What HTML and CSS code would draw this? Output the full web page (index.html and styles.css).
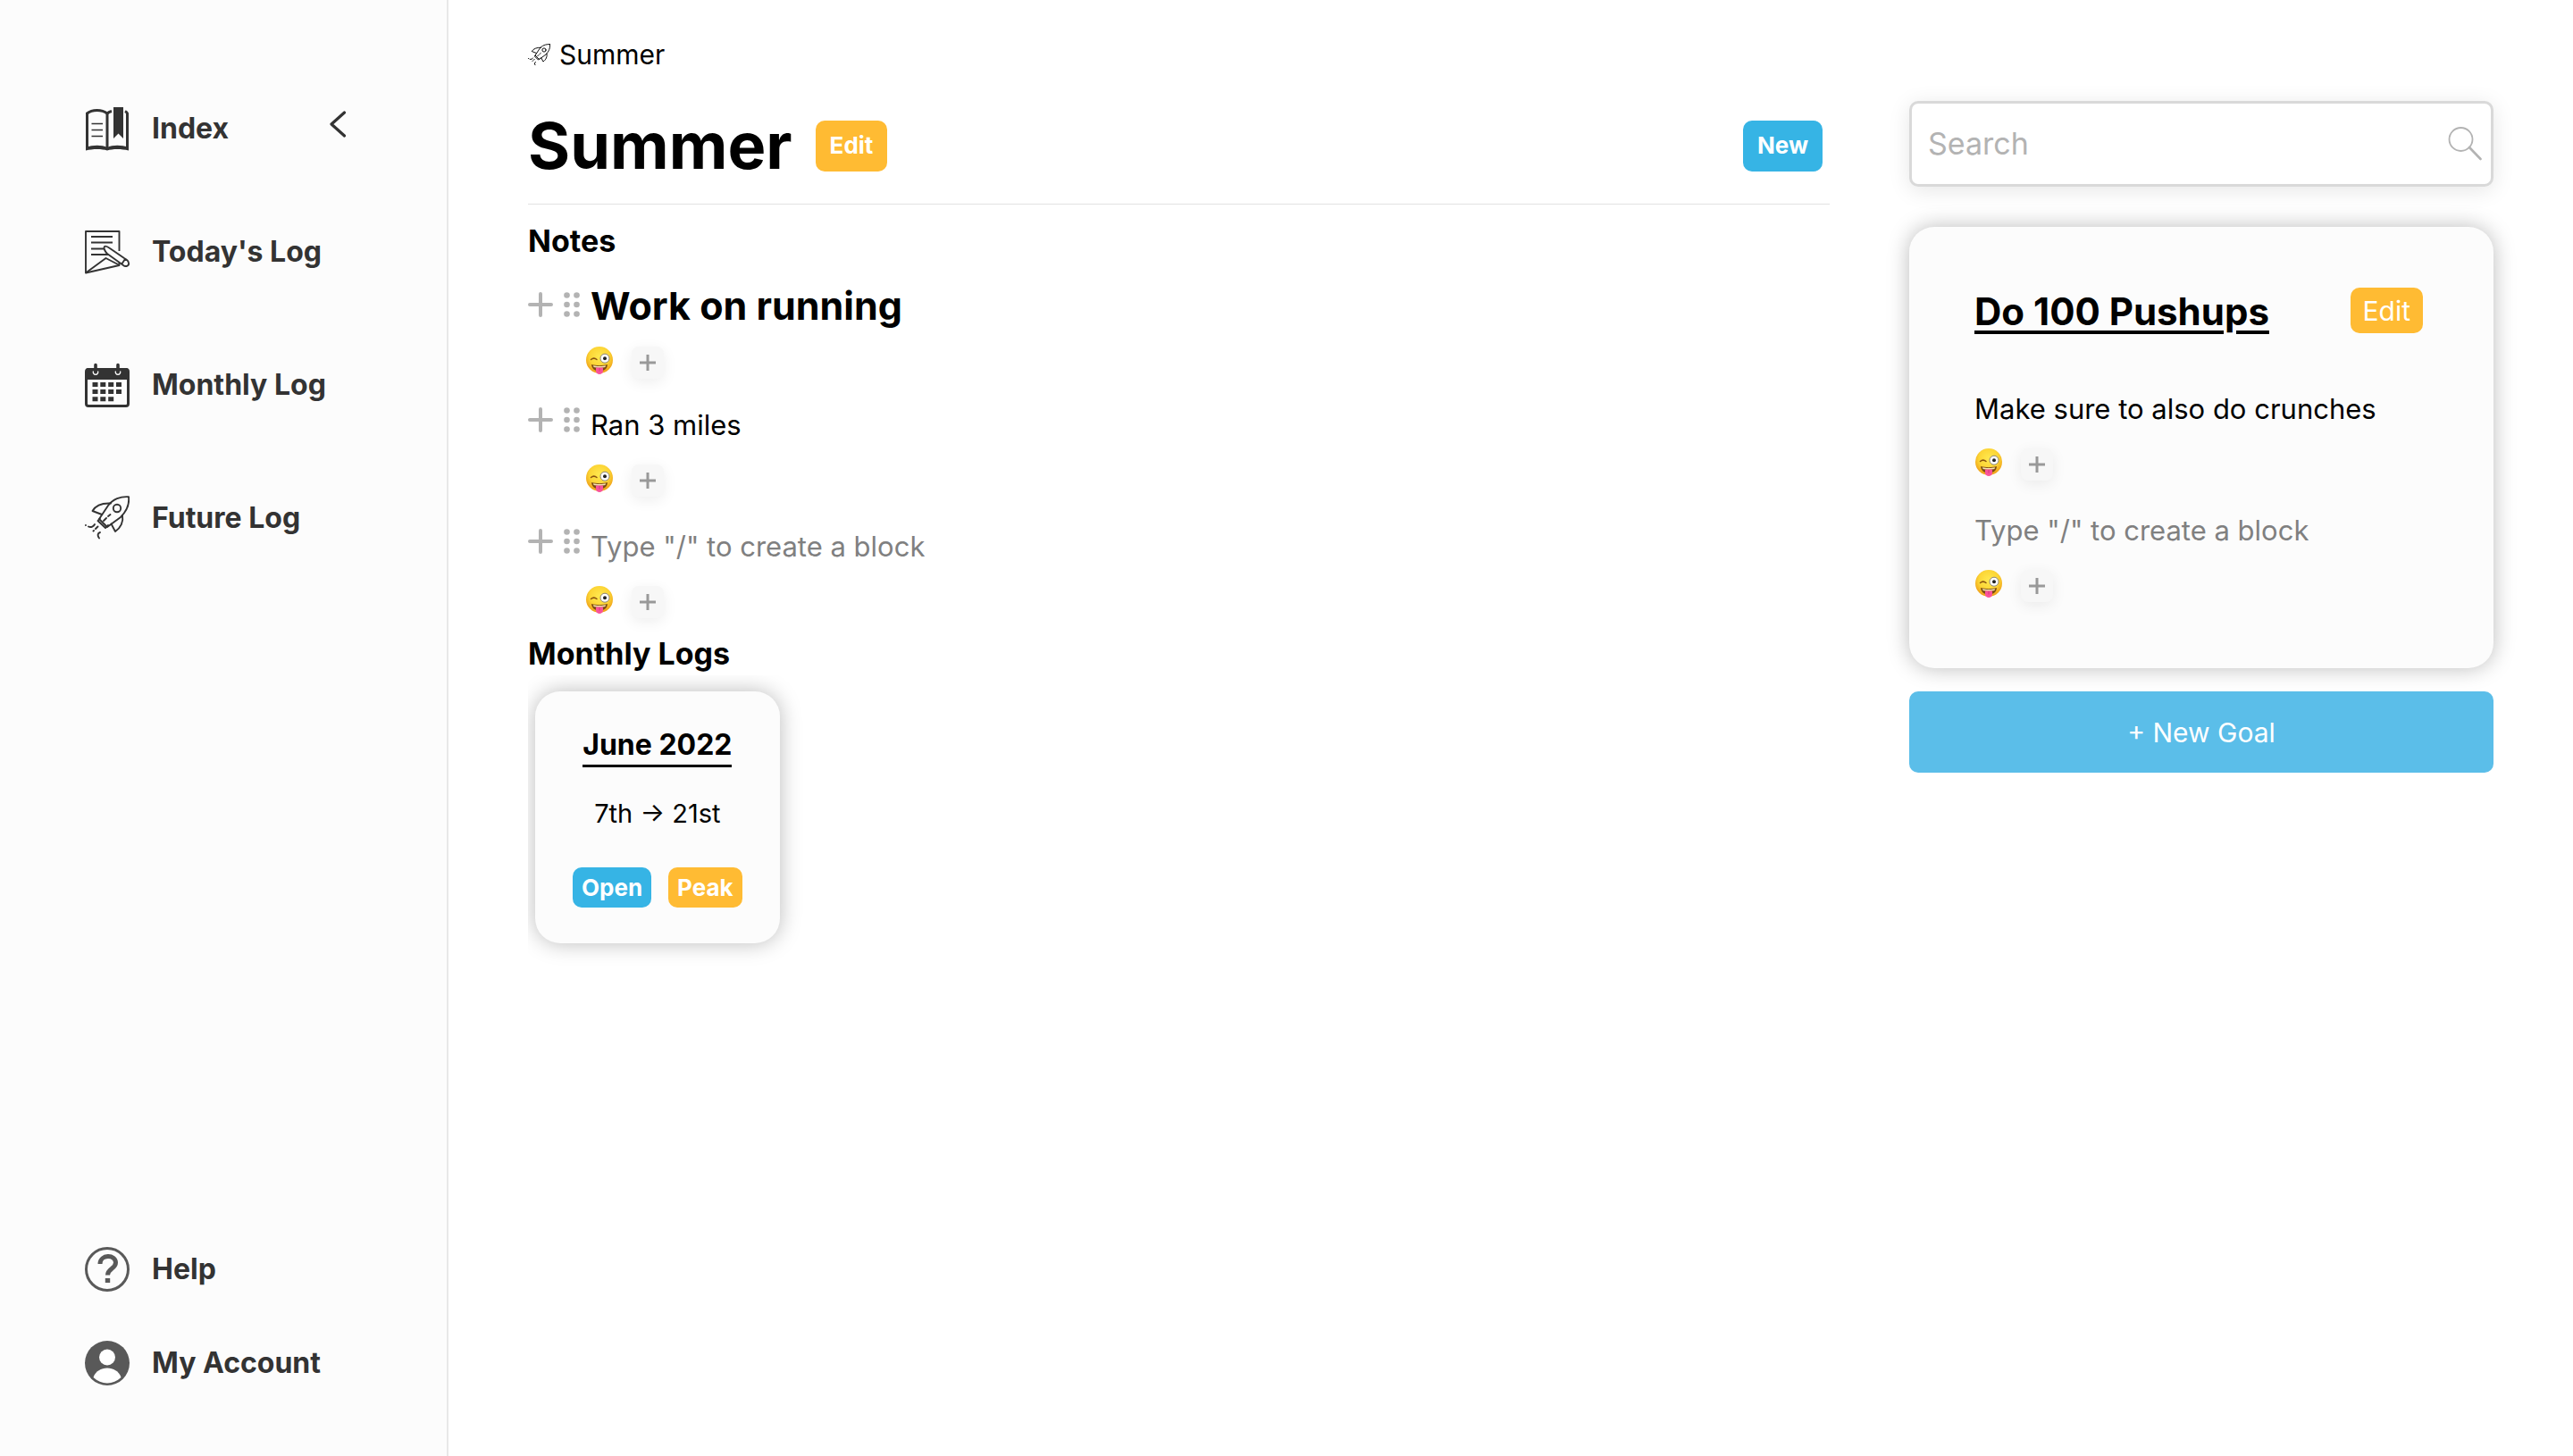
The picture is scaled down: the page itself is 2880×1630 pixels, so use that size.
FILE: index.html
```html
<!DOCTYPE html>
<html lang="en">
<head>
<meta charset="utf-8">
<meta name="viewport" content="width=device-width, initial-scale=1">
<title>Summer</title>
<link rel="stylesheet" href="styles.css">
</head>
<body>
<svg class="sprite" aria-hidden="true">
  <defs>
    <radialGradient id="face" cx="50%" cy="38%" r="62%">
      <stop offset="0" stop-color="#ffe94f"/>
      <stop offset="0.6" stop-color="#fcd535"/>
      <stop offset="1" stop-color="#ee9a15"/>
    </radialGradient>
  </defs>
  <symbol id="rocket" viewBox="0 0 50 50">
    <g fill="none" stroke="currentColor" stroke-width="1.9" stroke-linejoin="round" stroke-linecap="round">
      <path d="M49 1.200C40 .5 31 4 26 11L16 26L25 35L40 24C47 17 50 9 49 1.200Z"/>
      <circle cx="36" cy="14" r="4.200"/>
      <path d="M29 8.500C20 8 12 11 8.500 17L19 21"/>
      <path d="M42 22C43.500 29 40 36 34 40L29.500 31.500"/>
      <path d="M17 25L14.500 28L23 36L26 33"/>
      <path d="M21 28L24 25M26 23L28.500 21"/>
      <path d="M.8 33H1M4 34.500C7 36 10 34 11 32M9.500 39.500L10 39M12 37L14.500 34.500M17 41C14 42 14 45 16 47.500"/>
    </g>
  </symbol>
  <symbol id="wink" viewBox="0 0 32 32">
    <circle cx="16" cy="15" r="15" fill="url(#face)"/>
    <path d="M7 20C12 21.500 20 21.500 25 20C24.500 25.500 21 27.500 16 27.500C11 27.500 7.500 25 7 20Z" fill="#7b4a12"/>
    <path d="M9 21.300C13 22.300 19 22.300 23 21.300L22.500 23C19 24 13 24 9.500 23Z" fill="#f7e3b0"/>
    <path d="M12 23.500H20V27.500C20 32 12 32 12 27.500Z" fill="#f9539a"/>
    <path d="M16 24V27.500" stroke="#d8347d" stroke-width="1"/>
    <path d="M6.500 14.500C8.500 12.800 11 12.800 13 14.500" fill="none" stroke="#8a5410" stroke-width="1.500" stroke-linecap="round"/>
    <circle cx="22" cy="13.200" r="5" fill="#fff" stroke="#8c8478" stroke-width="1"/>
    <circle cx="22" cy="13.200" r="2" fill="#222"/>
  </symbol>
  <symbol id="plus" viewBox="0 0 28 28">
    <path d="M2 14H26M14 2V26" fill="none" stroke="currentColor" stroke-width="4" stroke-linecap="round"/>
  </symbol>
  <symbol id="grip" viewBox="0 0 18 28">
    <g fill="currentColor">
      <circle cx="3.500" cy="3.500" r="3.300"/><circle cx="14.500" cy="3.500" r="3.300"/>
      <circle cx="3.500" cy="14" r="3.300"/><circle cx="14.500" cy="14" r="3.300"/>
      <circle cx="3.500" cy="24.500" r="3.300"/><circle cx="14.500" cy="24.500" r="3.300"/>
    </g>
  </symbol>
  <symbol id="add" viewBox="0 0 18 18">
    <path d="M0 9H18M9 0V18" fill="none" stroke="currentColor" stroke-width="3"/>
  </symbol>
</svg>

<div class="app">
  <aside class="sidebar">
    <nav class="nav" aria-label="Logs">
      <div class="nav-head">
        <a class="nav-link" href="#index">
          <svg class="nav-icon" viewBox="0 0 50 50" aria-hidden="true">
            <path d="M2.500 47.500V8C8 3.200 19 3.200 25 8C26.500 6.800 28 6 30 5.500M45 5.500C46.300 6.200 47 7 47.500 8V47.500" fill="none" stroke="currentColor" stroke-width="3"/>
            <path d="M25 7V47" fill="none" stroke="currentColor" stroke-width="3"/>
            <path d="M1 46C9 43 19 43 25 46C31 43 41 43 49 46V49.500C41 47.500 31 47.500 25 49.500C19 47.500 9 47.500 1 49.500Z" fill="currentColor"/>
            <path d="M7.500 19.500H20M7.500 26.500H20M7.500 33.500H20" fill="none" stroke="currentColor" stroke-width="1.500"/>
            <path d="M32 1H43V36L37.500 30.500L32 36Z" fill="currentColor"/>
          </svg>
          <span>Index</span>
        </a>
        <button class="collapse" type="button" aria-label="Collapse sidebar">
          <svg viewBox="0 0 18 30" aria-hidden="true"><path d="M16.500 2L2 15L16.500 28" fill="none" stroke="currentColor" stroke-width="3.200" stroke-linecap="round" stroke-linejoin="round"/></svg>
        </button>
      </div>
      <div class="nav-list">
        <a class="nav-link" href="#today">
          <svg class="nav-icon" viewBox="0 0 50 50" aria-hidden="true">
            <g fill="none" stroke="currentColor" stroke-width="1.900" stroke-linejoin="round">
              <path d="M38.500 24V2H1V48.500L38.500 40V37"/>
              <path d="M1 48.500L23.500 32L38 39.500"/>
              <path d="M7 8H31M7 14.500H31M7 21.500H21M7 28H26"/>
              <path d="M22 19C20.500 21 23 25 25 27L43 40C46 42.500 50 40 49 37C48.500 35 46 33 44 32L28 21C26 19.500 23 18 22 19ZM41 39L45 33"/>
            </g>
          </svg>
          <span>Today's Log</span>
        </a>
        <a class="nav-link" href="#monthly">
          <svg class="nav-icon" viewBox="0 0 50 50" aria-hidden="true">
            <rect x="1.500" y="7.500" width="47" height="41" rx="2.500" fill="none" stroke="currentColor" stroke-width="3"/>
            <path d="M1 19V9Q1 6 4 6H46Q49 6 49 9V19Z" fill="currentColor"/>
            <path d="M9.500 9.500A2.700 2.700 0 1 0 14.500 9.500M34.500 9.500A2.700 2.700 0 1 0 39.500 9.500" fill="none" stroke="#fcfcfc" stroke-width="1.400"/>
            <path d="M12 2.500V10M37 2.500V10" stroke="currentColor" stroke-width="3.600" stroke-linecap="round"/>
            <path d="M8.500 22h6v5h-6zM17.300 22h6v5h-6zM26.200 22h6v5h-6zM35 22h6v5h-6zM8.500 30h6v5h-6zM17.300 30h6v5h-6zM26.200 30h6v5h-6zM35 30h6v5h-6zM8.500 38.300h6v5h-6zM17.300 38.300h6v5h-6zM26.200 38.300h6v5h-6z" fill="currentColor"/>
          </svg>
          <span>Monthly Log</span>
        </a>
        <a class="nav-link" href="#future">
          <svg class="nav-icon" aria-hidden="true"><use href="#rocket"/></svg>
          <span>Future Log</span>
        </a>
      </div>
    </nav>
    <nav class="nav-foot" aria-label="Support">
      <a class="nav-link" href="#help">
        <svg class="nav-icon muted" viewBox="0 0 50 50" aria-hidden="true">
          <circle cx="25" cy="25" r="23.500" fill="none" stroke="currentColor" stroke-width="3"/>
          <path d="M17 19C17 8 34.500 8 34.500 17.500C34.500 24.500 25.500 24 25.500 31.500" fill="none" stroke="currentColor" stroke-width="5"/>
          <rect x="22.800" y="35" width="5.400" height="5" fill="currentColor"/>
        </svg>
        <span>Help</span>
      </a>
      <a class="nav-link" href="#account">
        <svg class="nav-icon muted" viewBox="0 0 50 50" aria-hidden="true">
          <circle cx="25" cy="25" r="25" fill="currentColor"/>
          <circle cx="25" cy="18.500" r="9" fill="#fff"/>
          <path d="M9.500 41C14 27 36 27 40.500 41C32 49.500 18 49.500 9.500 41Z" fill="#fff"/>
        </svg>
        <span>My Account</span>
      </a>
    </nav>
  </aside>

  <main class="main">
    <a class="crumb" href="#summer">
      <svg class="crumb-icon" aria-hidden="true"><use href="#rocket"/></svg>
      <span>Summer</span>
    </a>
    <header class="page-head">
      <h1 class="page-title">Summer</h1>
      <button class="btn btn-yellow" type="button">Edit</button>
      <button class="btn btn-blue push" type="button">New</button>
    </header>

    <section>
      <h2 class="section-title notes-title">Notes</h2>
      <article class="block block-heading">
        <div class="block-row">
          <button class="tool tool-add" type="button" aria-label="Add block"><svg aria-hidden="true"><use href="#plus"/></svg></button>
          <button class="tool tool-grip" type="button" aria-label="Move block"><svg aria-hidden="true"><use href="#grip"/></svg></button>
          <h3 class="block-title">Work on running</h3>
        </div>
        <div class="reactions">
          <svg class="emoji" role="img" aria-label="Winking face with tongue"><use href="#wink"/></svg>
          <button class="react" type="button" aria-label="Add reaction"><svg aria-hidden="true"><use href="#add"/></svg></button>
        </div>
      </article>
      <article class="block">
        <div class="block-row">
          <button class="tool tool-add" type="button" aria-label="Add block"><svg aria-hidden="true"><use href="#plus"/></svg></button>
          <button class="tool tool-grip" type="button" aria-label="Move block"><svg aria-hidden="true"><use href="#grip"/></svg></button>
          <p class="block-text">Ran 3 miles</p>
        </div>
        <div class="reactions">
          <svg class="emoji" role="img" aria-label="Winking face with tongue"><use href="#wink"/></svg>
          <button class="react" type="button" aria-label="Add reaction"><svg aria-hidden="true"><use href="#add"/></svg></button>
        </div>
      </article>
      <article class="block">
        <div class="block-row">
          <button class="tool tool-add" type="button" aria-label="Add block"><svg aria-hidden="true"><use href="#plus"/></svg></button>
          <button class="tool tool-grip" type="button" aria-label="Move block"><svg aria-hidden="true"><use href="#grip"/></svg></button>
          <p class="block-text placeholder">Type "/" to create a block</p>
        </div>
        <div class="reactions">
          <svg class="emoji" role="img" aria-label="Winking face with tongue"><use href="#wink"/></svg>
          <button class="react" type="button" aria-label="Add reaction"><svg aria-hidden="true"><use href="#add"/></svg></button>
        </div>
      </article>
    </section>

    <section>
      <h2 class="section-title logs-title">Monthly Logs</h2>
      <div class="logs">
        <article class="card log-card">
          <h3 class="log-title">June 2022</h3>
          <p class="log-range">7th → 21st</p>
          <div class="log-actions">
            <button class="btn btn-small btn-blue" type="button">Open</button>
            <button class="btn btn-small btn-yellow" type="button">Peak</button>
          </div>
        </article>
      </div>
    </section>
  </main>

  <aside class="rail">
    <form class="search" role="search">
      <input class="search-input" type="search" placeholder="Search" aria-label="Search">
      <svg class="search-icon" viewBox="0 0 38 38" aria-hidden="true">
        <circle cx="14.500" cy="14" r="13" fill="none" stroke="currentColor" stroke-width="1.800"/>
        <path d="M24 23L36.500 36" stroke="currentColor" stroke-width="2.600" stroke-linecap="round"/>
      </svg>
    </form>
    <article class="card goal">
      <div class="goal-head">
        <h2 class="goal-title">Do 100 Pushups</h2>
        <button class="btn btn-goal btn-yellow" type="button">Edit</button>
      </div>
      <div class="block">
        <p class="block-text">Make sure to also do crunches</p>
        <div class="reactions">
          <svg class="emoji" role="img" aria-label="Winking face with tongue"><use href="#wink"/></svg>
          <button class="react" type="button" aria-label="Add reaction"><svg aria-hidden="true"><use href="#add"/></svg></button>
        </div>
      </div>
      <div class="block">
        <p class="block-text placeholder">Type "/" to create a block</p>
        <div class="reactions">
          <svg class="emoji" role="img" aria-label="Winking face with tongue"><use href="#wink"/></svg>
          <button class="react" type="button" aria-label="Add reaction"><svg aria-hidden="true"><use href="#add"/></svg></button>
        </div>
      </div>
    </article>
    <button class="new-goal" type="button">+ New Goal</button>
  </aside>
</div>
</body>
</html>
```
FILE: styles.css
```css
*,
*::before,
*::after {
  box-sizing: border-box;
}

body {
  margin: 0;
  background: #fff;
  color: #000;
  font-family: Inter, "Liberation Sans", sans-serif;
  font-size: 31px;
  line-height: 40px;
}

h1,
h2,
h3,
p {
  margin: 0;
}

a {
  color: inherit;
  text-decoration: none;
}

button {
  margin: 0;
  padding: 0;
  border: 0;
  background: none;
  color: inherit;
  font: inherit;
  cursor: pointer;
}

svg {
  display: block;
}

.sprite {
  position: absolute;
  width: 0;
  height: 0;
}

.app {
  display: flex;
  min-height: 100vh;
}

/* Sidebar */

.sidebar {
  display: flex;
  flex: none;
  flex-direction: column;
  justify-content: space-between;
  width: 502px;
  padding: 119px 113px 79px 95px;
  border-right: 2px solid #e8e8e8;
  background: #fcfcfc;
  color: #333;
}

.nav-head {
  display: flex;
  justify-content: space-between;
  margin-bottom: 88px;
}

.nav-list {
  display: flex;
  flex-direction: column;
  gap: 99px;
}

.nav-foot {
  display: flex;
  flex-direction: column;
  gap: 55px;
}

.nav-link {
  display: flex;
  align-items: center;
  gap: 25px;
  height: 50px;
  font-size: 32px;
  font-weight: 700;
  white-space: nowrap;
}

.nav-icon {
  width: 50px;
  height: 50px;
}

.muted {
  color: #595959;
}

.collapse {
  width: 18px;
  height: 40px;
}

.collapse svg {
  width: 18px;
  height: 30px;
}

/* Main column */

.main {
  flex: 1;
  min-width: 0;
  padding: 41px 89px;
}

.crumb {
  display: inline-flex;
  align-items: center;
  gap: 10px;
  font-size: 30px;
  vertical-align: top;
}

.crumb-icon {
  width: 25px;
  height: 25px;
}

.page-head {
  display: flex;
  align-items: center;
  padding: 32px 8px 15px 0;
  border-bottom: 1px solid #e2e2e2;
}

.page-title {
  margin-right: 26px;
  font-size: 72px;
  line-height: 100px;
}

.push {
  margin-left: auto;
}

.section-title {
  font-size: 34px;
  line-height: 48px;
}

.notes-title {
  margin: 17px 0 20px;
}

.logs-title {
  margin-top: 16px;
}

/* Buttons */

.btn {
  height: 57px;
  padding: 0 16px;
  border-radius: 10px;
  color: #fff;
  font-size: 26px;
  font-weight: 700;
}

.btn-small {
  height: 45px;
  padding: 0 10px;
}

.btn-goal {
  height: 51px;
  padding: 0 14px;
  font-size: 30px;
  font-weight: 400;
}

.btn-blue {
  background: #36b4e5;
}

.btn-yellow {
  background: #ffbb33;
}

/* Blocks */

.block + .block {
  margin-top: 36px;
}

.block-heading + .block {
  margin-top: 32px;
}

.block-row {
  display: flex;
}

.tool {
  flex: none;
  height: 28px;
  color: #b3b3b3;
}

.tool svg {
  width: 100%;
  height: 28px;
}

.tool-add {
  width: 28px;
  margin-right: 12px;
}

.tool-grip {
  width: 18px;
  margin-right: 12px;
}

.block-title {
  font-size: 43px;
  line-height: 56px;
}

.placeholder {
  color: #808080;
}

.block-heading .tool {
  margin-top: 13px;
}

.block-heading .reactions {
  margin-top: 18px;
}

.reactions {
  display: flex;
  gap: 20px;
  margin-top: 24px;
}

.main .reactions {
  padding-left: 64px;
}

.emoji {
  width: 32px;
  height: 32px;
}

.react {
  display: grid;
  place-items: center;
  width: 36px;
  height: 36px;
  border-radius: 8px;
  background: #f7f7f7;
  box-shadow: 0 4px 16px rgba(0, 0, 0, 0.07);
  color: #999;
}

.react svg {
  width: 18px;
  height: 18px;
}

/* Cards */

.card {
  border-radius: 28px;
  background: #fcfcfc;
  box-shadow: 0 0 24px rgba(0, 0, 0, 0.27);
}

.logs {
  display: flex;
  gap: 32px;
  padding: 18px 8px 32px;
  overflow: hidden;
}

.log-card {
  display: flex;
  flex-direction: column;
  align-items: center;
  padding: 38px 42px 40px;
}

.log-title {
  border-bottom: 3px solid #000;
  font-size: 32px;
  line-height: 44px;
}

.log-range {
  margin: 32px 0 40px;
  font-size: 29px;
}

.log-actions {
  display: flex;
  gap: 19px;
}

/* Right rail */

.rail {
  flex: none;
  width: 743px;
  padding: 113px 89px 64px 0;
}

.search {
  display: flex;
  align-items: center;
  height: 96px;
  padding: 0 10px 0 18px;
  border: 3px solid #d9d9d9;
  border-radius: 10px;
  background: #fff;
  box-shadow: 0 4px 24px rgba(0, 0, 0, 0.1);
}

.search-input {
  flex: 1;
  min-width: 0;
  padding: 0;
  border: 0;
  outline: 0;
  background: none;
  color: #333;
  font: inherit;
  font-size: 34px;
  appearance: none;
}

.search-input::placeholder {
  color: #b3b3b3;
  opacity: 1;
}

.search-icon {
  width: 38px;
  height: 38px;
  color: #b3b3b3;
}

.goal {
  margin: 45px 0 26px;
  padding: 68px 79px 74px 73px;
}

.goal-head {
  display: flex;
  align-items: flex-start;
  justify-content: space-between;
  margin-bottom: 62px;
}

.goal-title {
  font-size: 42px;
  line-height: 54px;
  text-decoration: underline;
  text-decoration-thickness: 4px;
  text-underline-offset: 6px;
}

.new-goal {
  width: 100%;
  height: 91px;
  border-radius: 10px;
  background: #5bbee9;
  color: #fff;
  font-size: 30px;
}
```
